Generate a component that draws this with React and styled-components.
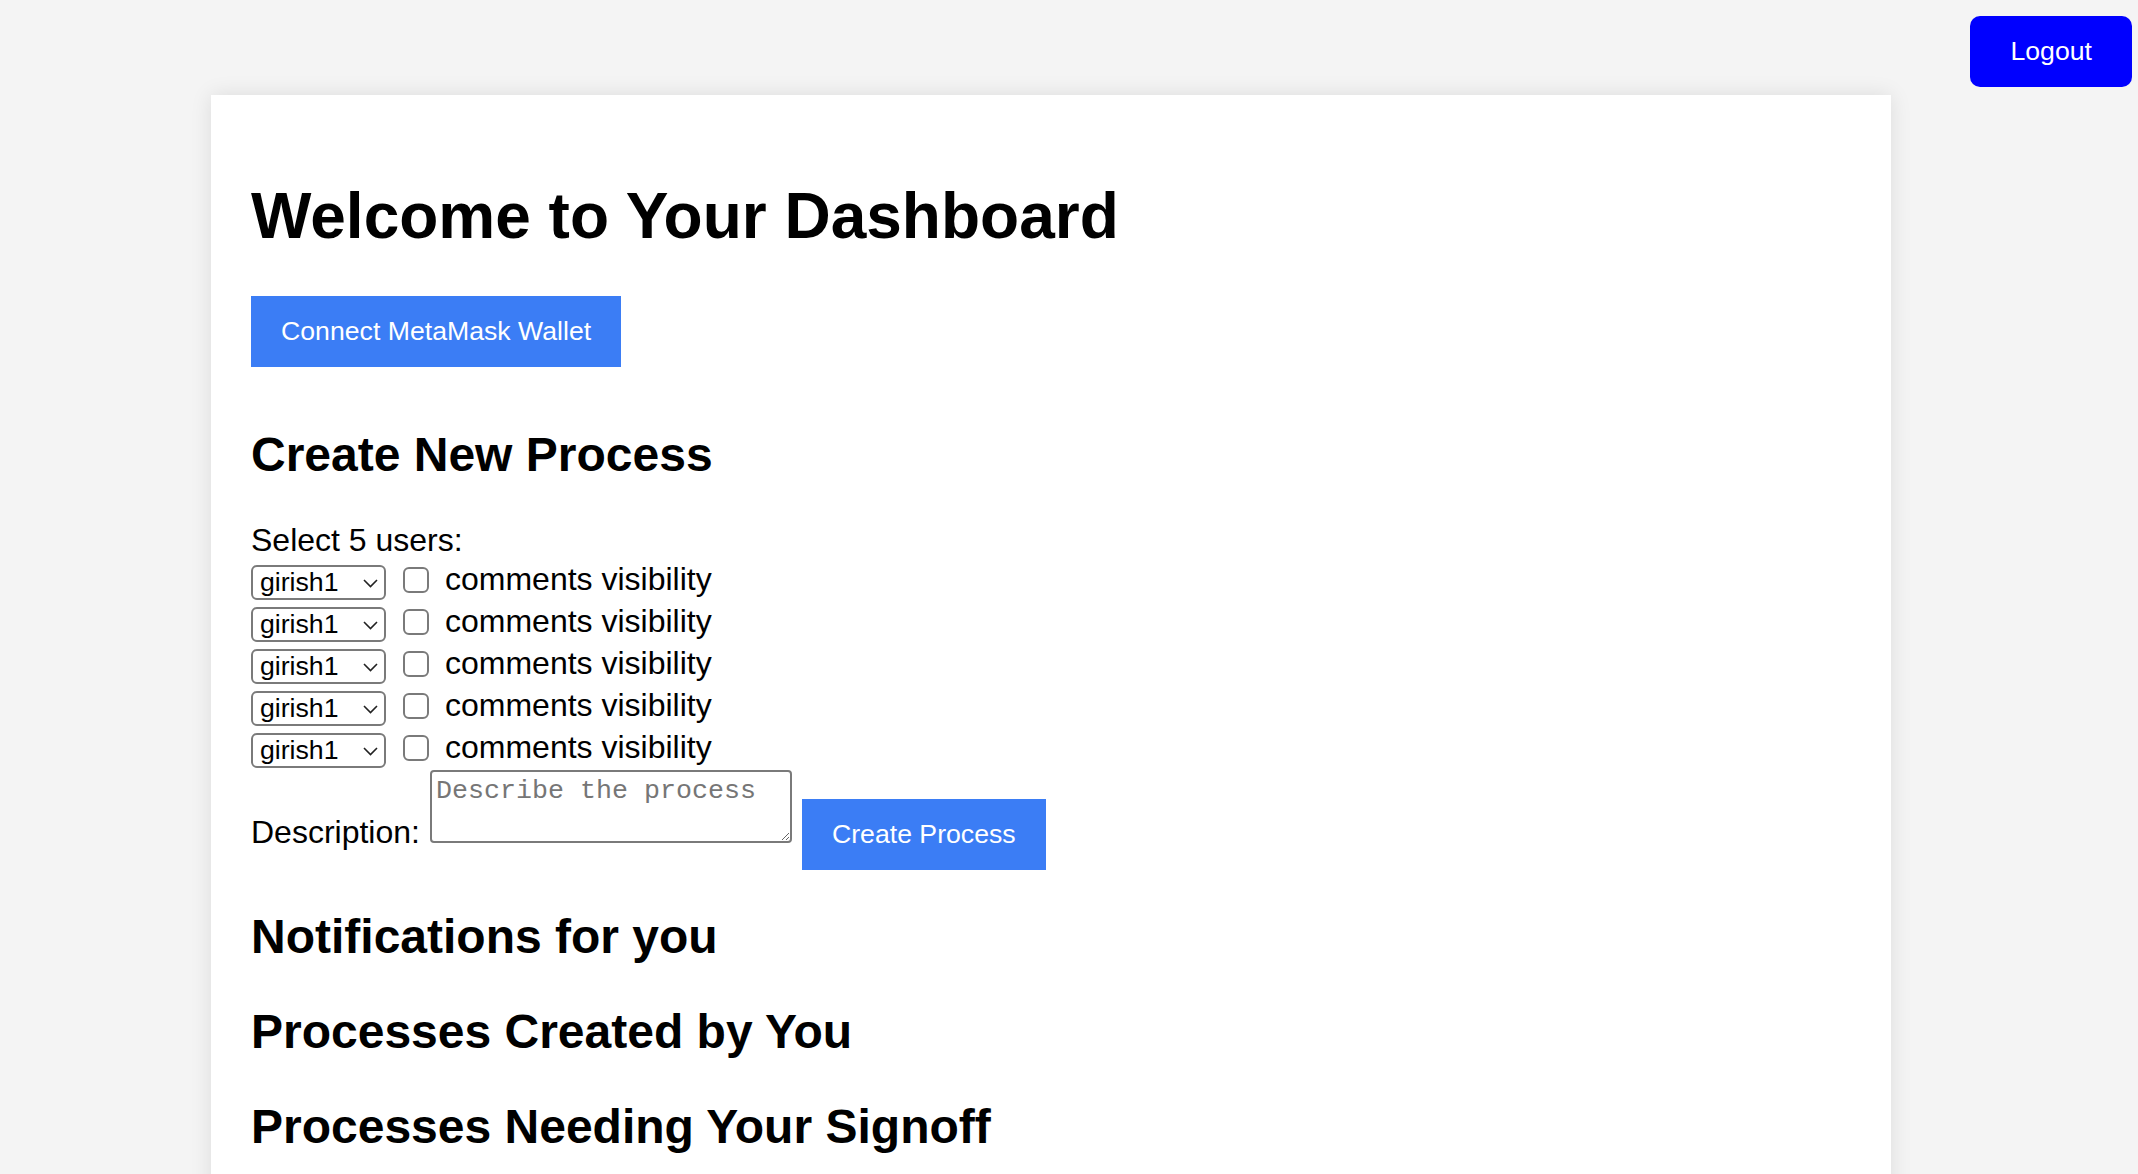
import styled, { createGlobalStyle } from "styled-components";

const GlobalStyle = createGlobalStyle`
  html {
    overflow: hidden;
  }

  body {
    margin: 0;
    background: #f4f4f4;
    font-family: "Liberation Sans", Arial, Helvetica, sans-serif;
    color: #000;
  }
`;

const TopBar = styled.div`
  display: flex;
  justify-content: flex-end;
  padding: 16px 6px 0 0;
`;

const LogoutButton = styled.button`
  background: #0000ff;
  color: #fff;
  border: none;
  border-radius: 10px;
  padding: 20px 40px;
  font-family: "Liberation Sans", Arial, sans-serif;
  font-size: 26.67px;
  cursor: pointer;
`;

const Card = styled.div`
  box-sizing: border-box;
  width: 1680px;
  margin: 8px 0 0 211px;
  padding: 40px 40px 40px;
  background: #fff;
  box-shadow: 0 0 20px rgba(0, 0, 0, 0.1);
`;

const Title = styled.h1`
  font-size: 64px;
  font-weight: 700;
  margin: 44px 0 43px;
`;

const ActionRow = styled.div`
  padding-bottom: 20px;
`;

const PrimaryButton = styled.button`
  display: inline-block;
  vertical-align: baseline;
  background: #3b7df5;
  color: #fff;
  border: none;
  border-radius: 0;
  padding: 20px 30px;
  margin: 0 0 0 ${(props) => props.$offset || 0}px;
  font-family: "Liberation Sans", Arial, sans-serif;
  font-size: 26.67px;
  cursor: pointer;
`;

const SectionTitle = styled.h2`
  font-size: 48px;
  font-weight: 700;
  margin: 39.84px 0;
`;

const FieldLabel = styled.div`
  font-size: 32px;
`;

const UserRow = styled.div`
  display: flex;
  align-items: center;
  height: 42px;
`;

const SelectWrap = styled.div`
  position: relative;
  margin-top: 5px;
`;

const UserSelect = styled.select`
  appearance: none;
  box-sizing: border-box;
  width: 135px;
  height: 35px;
  padding: 0 30px 0 7px;
  border: 2px solid #7a7a7a;
  border-radius: 6px;
  background: #fff;
  color: #000;
  font-family: "Liberation Sans", Arial, sans-serif;
  font-size: 26.67px;
  display: block;
`;

const Chevron = styled.svg`
  position: absolute;
  right: 8px;
  top: 14px;
  pointer-events: none;
`;

const Checkbox = styled.input`
  appearance: none;
  box-sizing: border-box;
  width: 26px;
  height: 26px;
  margin: 0 16px 0 17px;
  border: 2px solid #7a7a7a;
  border-radius: 6px;
  background: #fff;
`;

const CheckLabel = styled.label`
  font-size: 32px;
`;

const DescriptionRow = styled.div`
  font-size: 32px;
`;

const DescTextarea = styled.textarea`
  box-sizing: border-box;
  width: 362px;
  height: 73px;
  margin: 1px 0 0 10px;
  padding: 4px;
  border: 2px solid #7a7a7a;
  border-radius: 4px;
  vertical-align: baseline;
  font-family: "Liberation Mono", "Courier New", monospace;
  font-size: 26.67px;

  &::placeholder {
    color: #767676;
  }
`;

const users = [0, 1, 2, 3, 4];

export default function App() {
  return (
    <>
      <GlobalStyle />
      <TopBar>
        <LogoutButton>Logout</LogoutButton>
      </TopBar>

      <Card>
        <Title>Welcome to Your Dashboard</Title>

        <ActionRow>
          <PrimaryButton>Connect MetaMask Wallet</PrimaryButton>
        </ActionRow>

        <SectionTitle>Create New Process</SectionTitle>
        <FieldLabel>Select 5 users:</FieldLabel>
        {users.map((i) => (
          <UserRow key={i}>
            <SelectWrap>
              <UserSelect defaultValue="girish1">
                <option value="girish1">girish1</option>
              </UserSelect>
              <Chevron width="15" height="9" viewBox="0 0 15 9">
                <path d="M1 1 L7.5 7.5 L14 1" fill="none" stroke="#222" strokeWidth="1.6" />
              </Chevron>
            </SelectWrap>
            <Checkbox type="checkbox" id={`vis-${i}`} />
            <CheckLabel htmlFor={`vis-${i}`}>comments visibility</CheckLabel>
          </UserRow>
        ))}

        <DescriptionRow>
          Description:
          <DescTextarea placeholder="Describe the process" />
          <PrimaryButton $offset={10}>Create Process</PrimaryButton>
        </DescriptionRow>

        <SectionTitle>Notifications for you</SectionTitle>
        <SectionTitle>Processes Created by You</SectionTitle>
        <SectionTitle>Processes Needing Your Signoff</SectionTitle>
      </Card>
    </>
  );
}
